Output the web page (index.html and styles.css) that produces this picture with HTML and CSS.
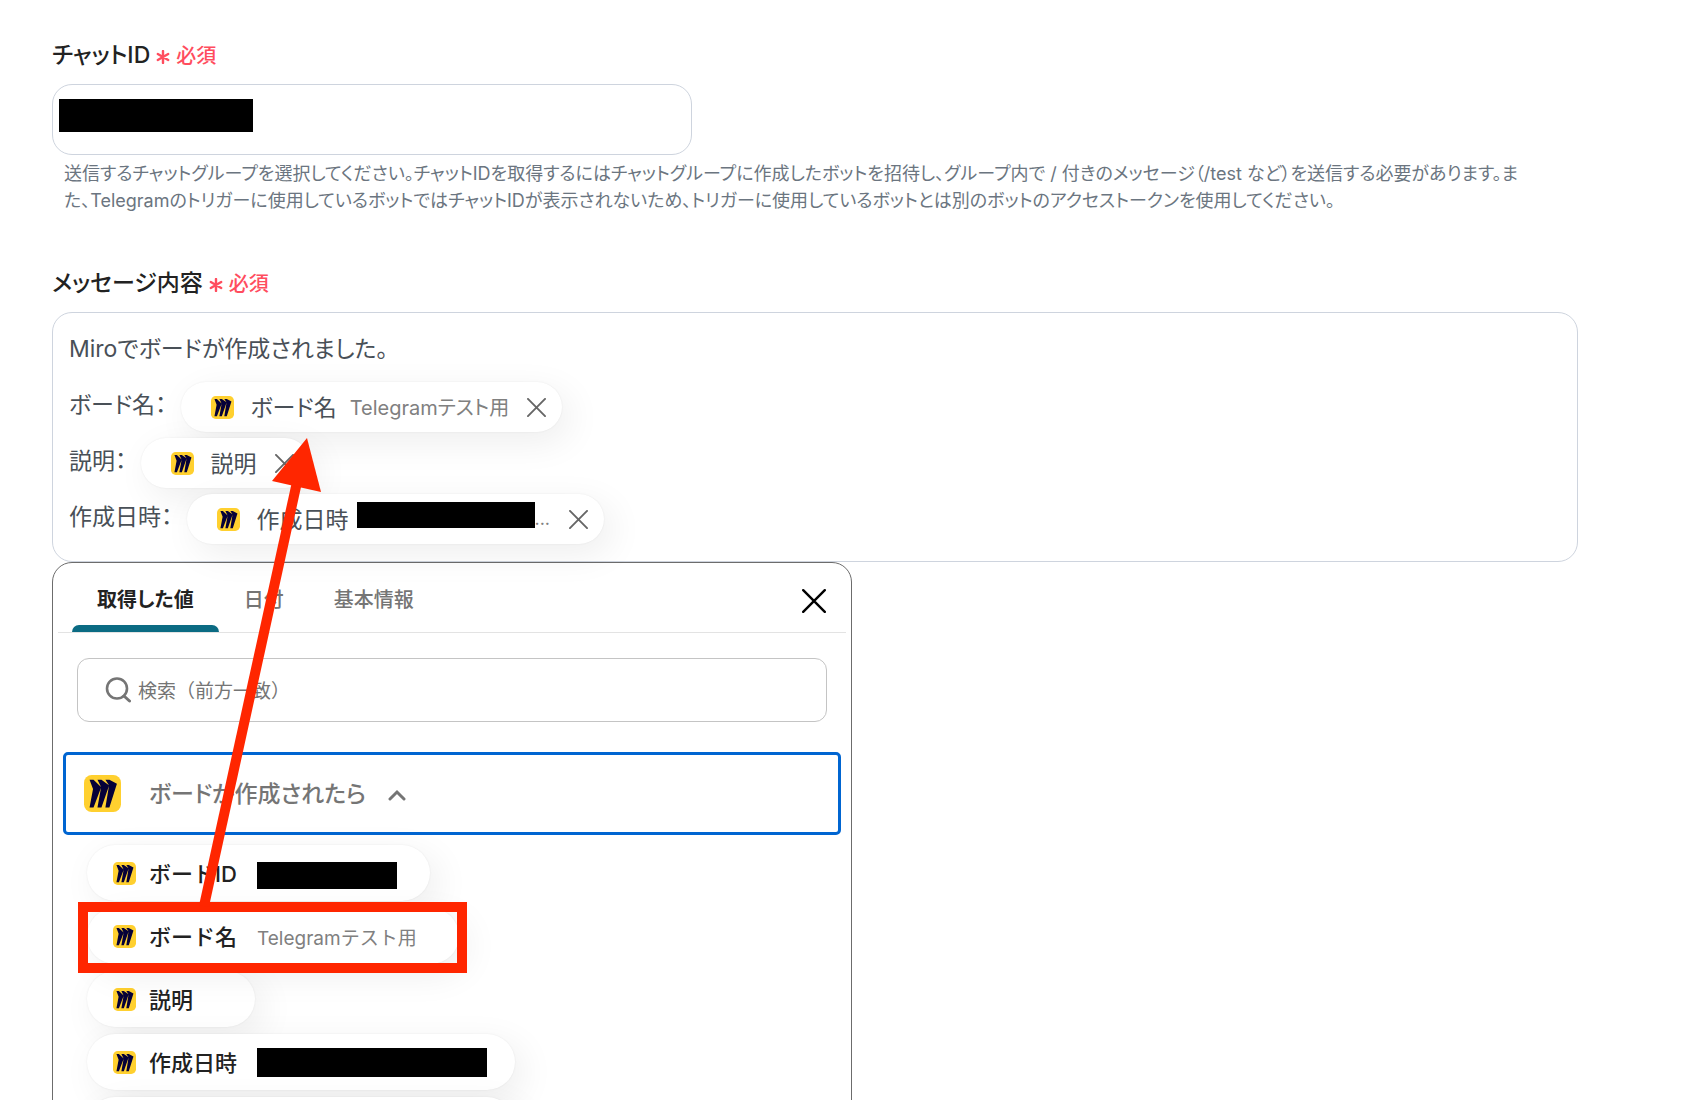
FILE: index.html
```html
<!DOCTYPE html>
<html lang="ja">
<head>
<meta charset="utf-8">
<meta name="viewport" content="width=device-width, initial-scale=1">
<title>メッセージを送信</title>
<link rel="stylesheet" href="styles.css">
</head>
<body>
<svg class="sprite" aria-hidden="true">
  <symbol id="miro" viewBox="0 0 24 24">
    <rect width="24" height="24" rx="5" fill="#ffd02f"/>
    <path transform="translate(3.6 3) scale(.74 .75)" fill="#050038" d="M17.392 0H13.9L17 4.808 10.444 0H6.949l3.102 6.3L3.494 0H0l3.05 8.131L0 24h3.494L10.05 6.985 6.949 24h3.494L17 5.494 13.899 24h3.493L24 3.672 17.392 0z"/>
  </symbol>
  <symbol id="close" viewBox="0 0 20 20">
    <path d="M1 1 19 19M19 1 1 19" fill="none" stroke="currentColor" stroke-linecap="round"/>
  </symbol>
  <symbol id="asterisk" viewBox="0 0 14 14">
    <path d="M7 1v12M1.800 4 12.200 10M12.200 4 1.800 10" fill="none" stroke="currentColor" stroke-width="2.400" stroke-linecap="round"/>
  </symbol>
</svg>

<main class="page">
  <section class="field">
    <div class="field-head">
      <label class="field-label" for="chat-id">チャットID</label>
      <span class="required"><svg class="asterisk"><use href="#asterisk"/></svg>必須</span>
    </div>
    <div class="input-wrap">
      <input class="text-input" id="chat-id" type="text">
      <span class="redaction redaction-input"></span>
    </div>
    <p class="help">送信するチャットグループを選択してください。チャットIDを取得するにはチャットグループに作成したボットを招待し、グループ内で / 付きのメッセージ（/test など）を送信する必要があります。また、Telegramのトリガーに使用しているボットではチャットIDが表示されないため、トリガーに使用しているボットとは別のボットのアクセストークンを使用してください。</p>
  </section>

  <section class="field">
    <div class="field-head">
      <span class="field-label" id="message-label">メッセージ内容</span>
      <span class="required"><svg class="asterisk"><use href="#asterisk"/></svg>必須</span>
    </div>
    <div class="composer">
      <div class="editor" role="textbox" aria-multiline="true" aria-labelledby="message-label" contenteditable="true" spellcheck="false">
        <div class="line">Miroでボードが作成されました。</div>
        <div class="line">ボード名：<span class="token" contenteditable="false"><svg class="token-logo"><use href="#miro"/></svg><span class="token-name">ボード名</span><span class="token-value">Telegramテスト用</span><button class="token-close" type="button" aria-label="削除"><svg><use href="#close"/></svg></button></span></div>
        <div class="line">説明：<span class="token" contenteditable="false"><svg class="token-logo"><use href="#miro"/></svg><span class="token-name">説明</span><button class="token-close" type="button" aria-label="削除"><svg><use href="#close"/></svg></button></span></div>
        <div class="line">作成日時：<span class="token" contenteditable="false"><svg class="token-logo"><use href="#miro"/></svg><span class="token-name">作成日時</span><span class="token-cut"><span class="redaction redaction-token"></span>...</span><button class="token-close" type="button" aria-label="削除"><svg><use href="#close"/></svg></button></span></div>
      </div>

      <div class="picker">
        <div class="tabs" role="tablist">
          <button class="tab tab-active" role="tab" aria-selected="true" type="button">取得した値</button>
          <button class="tab" role="tab" aria-selected="false" type="button">日付</button>
          <button class="tab" role="tab" aria-selected="false" type="button">基本情報</button>
          <button class="picker-close" type="button" aria-label="閉じる"><svg><use href="#close"/></svg></button>
        </div>
        <label class="search">
          <svg class="search-icon" viewBox="0 0 26 26" aria-hidden="true"><circle cx="12" cy="11.500" r="10" fill="none" stroke="currentColor" stroke-width="2.600"/><path d="m19 19 5.500 5" fill="none" stroke="currentColor" stroke-width="3" stroke-linecap="round"/></svg>
          <input class="search-input" type="search" placeholder="検索（前方一致）" aria-label="検索">
        </label>
        <button class="source" type="button" aria-expanded="true">
          <svg class="source-logo"><use href="#miro"/></svg>
          <span class="source-name">ボードが作成されたら</span>
          <svg class="chevron" viewBox="0 0 18 12" aria-hidden="true"><path d="m2 10 7-7 7 7" fill="none" stroke="currentColor" stroke-width="3" stroke-linecap="round"/></svg>
        </button>
        <div class="values">
          <button class="value" type="button"><svg class="token-logo"><use href="#miro"/></svg><span class="value-name">ボードID</span><span class="redaction redaction-id"></span></button>
          <button class="value value-marked" type="button"><svg class="token-logo"><use href="#miro"/></svg><span class="value-name">ボード名</span><span class="value-sample">Telegramテスト用</span></button>
          <button class="value" type="button"><svg class="token-logo"><use href="#miro"/></svg><span class="value-name">説明</span><span class="value-sample"></span></button>
          <button class="value value-date" type="button"><svg class="token-logo"><use href="#miro"/></svg><span class="value-name">作成日時</span><span class="redaction redaction-date"></span></button>
          <button class="value value-blank" type="button"></button>
        </div>
      </div>

      <svg class="arrow" viewBox="0 0 300 600" aria-hidden="true"><path d="M152 594 245 170" stroke="#ff2600" stroke-width="10" fill="none"/><path d="m255 126 14 54-49-11z" fill="#ff2600"/></svg>
    </div>
  </section>
</main>
</body>
</html>
```
FILE: styles.css
```css
* {
  box-sizing: border-box;
}

body {
  margin: 0;
  background: #fff;
  color: #222;
  font-family: Inter, "Noto Sans CJK JP", sans-serif;
}

button,
input {
  font: inherit;
  color: inherit;
}

button {
  border: 0;
  padding: 0;
  background: none;
}

.sprite {
  position: absolute;
  width: 0;
  height: 0;
}

.page {
  height: 100vh;
  overflow: hidden;
  padding: 36px 112px 0 52px;
}

.field {
  margin-bottom: 50px;
}

.field-head {
  display: flex;
  align-items: baseline;
  gap: 6px;
  height: 40px;
  margin-bottom: 8px;
  font-size: 23px;
  line-height: 38px;
  font-feature-settings: "palt";
}

.field-label {
  font-weight: 500;
}

.required {
  color: #ff4d5e;
  font-size: 20px;
  font-weight: 500;
}

.asterisk {
  width: 14px;
  height: 14px;
  margin-right: 6px;
  vertical-align: -1px;
}

.redaction {
  display: block;
  background: #000;
}

.input-wrap {
  position: relative;
  width: 640px;
  max-width: 100%;
}

.text-input {
  display: block;
  width: 100%;
  height: 71px;
  padding: 0 16px;
  border: 1px solid #ced4de;
  border-radius: 20px;
  background: #fff;
}

.redaction-input {
  position: absolute;
  left: 7px;
  top: 15px;
  width: 194px;
  height: 33px;
}

.help {
  margin: 5px 0 0;
  padding: 0 48px 0 12px;
  color: #6b7580;
  font-size: 18px;
  line-height: 27px;
  font-feature-settings: "palt";
}

.composer {
  position: relative;
}

.editor {
  padding: 6px 16px 18px;
  border: 1px solid #ced4de;
  border-radius: 20px;
  color: #495057;
  font-size: 23px;
  font-feature-settings: "palt";
  outline: 0;
}

.line {
  display: flex;
  align-items: center;
  height: 56px;
}

.token {
  display: flex;
  align-items: center;
  height: 50px;
  margin: 8px 0 0 14px;
  padding: 0 16px 0 30px;
  border-radius: 25px;
  background: #fff;
  box-shadow: 0 0 2px rgba(0, 0, 0, .08), 8px 10px 36px rgba(0, 0, 0, .07);
}

.token-logo {
  width: 23px;
  height: 23px;
}

.token-name {
  margin-left: 17px;
  padding-bottom: 3px;
}

.token-value {
  margin-left: 13px;
  padding-bottom: 2px;
  color: #808080;
  font-size: 20px;
}

.token-cut {
  display: flex;
  align-items: flex-end;
  height: 26px;
  margin: 0 1px 8px 8px;
  color: #808080;
  font-size: 18px;
  line-height: 18px;
}

.redaction-token {
  width: 178px;
  height: 26px;
}

.token-close {
  display: flex;
  margin-left: 18px;
  color: #666;
}

.token-close svg {
  width: 19px;
  height: 19px;
  stroke-width: 2;
}

.picker {
  width: 800px;
  max-width: 100%;
  padding: 0 5px 24px;
  border: 1px solid #6c6c6c;
  border-radius: 20px;
  background: #fff;
}

.tabs {
  display: flex;
  height: 70px;
  padding: 0 20px 0 14px;
  border-bottom: 1px solid #e3e3e3;
  color: #757575;
  font-size: 20px;
  font-feature-settings: "palt";
}

.tab {
  padding: 2px 25px 0;
  font-weight: 500;
}

.tab-active {
  color: #222;
  font-weight: 700;
  position: relative;
}

.tab-active::after {
  content: "";
  position: absolute;
  left: 0;
  right: 0;
  bottom: 0;
  height: 7px;
  border-radius: 7px 7px 0 0;
  background: #0b6b83;
}

.picker-close {
  display: flex;
  align-items: center;
  margin-left: auto;
  padding-top: 6px;
  color: #000;
}

.picker-close svg {
  width: 24px;
  height: 24px;
  stroke-width: 2;
}

.search {
  display: flex;
  align-items: center;
  gap: 7px;
  height: 64px;
  margin: 25px 19px 30px;
  padding: 0 27px;
  border: 1px solid #c4c4c4;
  border-radius: 12px;
  color: #757575;
}

.search-icon {
  width: 26px;
  height: 26px;
}

.search-input {
  flex: 1;
  min-width: 0;
  padding: 2px 0 0;
  border: 0;
  outline: 0;
  background: none;
  font-size: 19px;
}

.search-input::placeholder {
  color: #757575;
}

.source {
  display: flex;
  align-items: center;
  width: calc(100% - 10px);
  height: 83px;
  margin: 0 5px 10px;
  padding: 0 18px;
  border: 3px solid #0065d1;
  border-radius: 5px;
  color: #757575;
  font-size: 23px;
}

.source-logo {
  width: 37px;
  height: 37px;
}

.source-name {
  margin-left: 28px;
  padding-bottom: 4px;
  font-weight: 500;
  font-feature-settings: "palt";
}

.chevron {
  width: 18px;
  height: 12px;
  margin: 2px 0 0 22px;
}

.values {
  display: flex;
  flex-direction: column;
  align-items: flex-start;
  gap: 7px;
  padding-left: 29px;
}

.value {
  display: flex;
  align-items: center;
  height: 56px;
  padding: 0 33px 0 26px;
  border-radius: 28px;
  background: #fff;
  box-shadow: 0 0 2px rgba(0, 0, 0, .08), 8px 10px 36px rgba(0, 0, 0, .07);
}

.value-name {
  margin: 0 20px 0 13px;
  padding-bottom: 2px;
  font-size: 22px;
  font-weight: 500;
}

.value-sample {
  min-width: 9px;
  color: #808080;
  font-size: 19px;
}

.value-marked {
  position: relative;
  padding-right: 42px;
}

.value-marked::after {
  content: "";
  position: absolute;
  inset: -6px -8px -9px -9px;
  border: 10px solid #ff2600;
}

.value-date {
  padding-right: 28px;
}

.value-blank {
  width: 428px;
}

.redaction-id {
  width: 140px;
  height: 27px;
  margin-top: 4px;
}

.redaction-date {
  width: 230px;
  height: 29px;
}

.arrow {
  position: absolute;
  left: 0;
  top: 0;
  width: 300px;
  height: 600px;
  pointer-events: none;
}
```
